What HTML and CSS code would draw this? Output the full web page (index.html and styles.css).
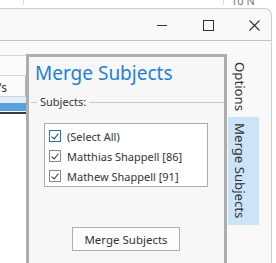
FILE: index.html
```html
<!DOCTYPE html>
<html lang="en">
<head>
    <meta charset="UTF-8">
    <title>Merge Subjects</title>
    <link rel="stylesheet" href="styles.css">
</head>
<body>
    <!-- what shows of the desktop behind the window -->
    <div class="backdrop">
        <span class="backdrop-gap first"></span>
        <span class="backdrop-gap second"></span>
        <span class="backdrop-text">10 N</span>
    </div>

    <div class="window">
        <div class="titlebar">
            <span class="caption-btn">
                <svg width="10" height="10" viewBox="0 0 10 10"><path d="M0 5.5H10" stroke="#333" stroke-width="1"/></svg>
            </span>
            <span class="caption-btn">
                <svg width="11" height="11" viewBox="0 0 11 11"><rect x="0.5" y="0.5" width="10" height="10" fill="none" stroke="#333" stroke-width="1"/></svg>
            </span>
            <span class="caption-btn close">
                <svg width="11" height="11" viewBox="0 0 11 11"><path d="M0.5 0.5L10.5 10.5M10.5 0.5L0.5 10.5" stroke="#333" stroke-width="1.1"/></svg>
            </span>
        </div>

        <div class="client">
            <!-- grid left of the dock, mostly covered -->
            <div class="left-pane">
                <div class="lp-row"></div>
                <div class="lp-row lp-header">'s</div>
                <div class="lp-selected"></div>
                <div class="lp-split"></div>
            </div>

            <div class="dock">
                <div class="dock-title">Merge Subjects</div>
                <fieldset class="group">
                    <legend>Subjects:</legend>
                    <div class="subject-list">
                        <label class="subject focused"><span class="check"></span>(Select All)</label>
                        <label class="subject"><span class="check"></span>Matthias Shappell [86]</label>
                        <label class="subject"><span class="check"></span>Mathew Shappell [91]</label>
                    </div>
                </fieldset>
                <div class="actions">
                    <button class="merge-button">Merge Subjects</button>
                </div>
            </div>

            <div class="side-tabs">
                <div class="side-tab">Options</div>
                <div class="side-tab active">Merge Subjects</div>
            </div>
        </div>
    </div>
</body>
</html>
```

FILE: styles.css
```css
/* General */
body {
    margin: 0;
    width: 276px;
    height: 263px;
    overflow: hidden;
    background: #ffffff;
    font-family: 'Noto Sans', 'Open Sans', sans-serif;
    color: #333;
}

/* Desktop strip above the window */
.backdrop {
    display: flex;
    height: 8px;
    overflow: hidden;
}

.backdrop-gap {
    height: 5px;
    border-right: 1px solid #dcdcdc;
}

.backdrop-gap.first {
    width: 23px;
}

.backdrop-gap.second {
    width: 199px;
}

.backdrop-text {
    font-size: 11px;
    line-height: 11px;
    color: #777;
    padding-left: 7px;
    margin-top: -5px;
}

/* Window */
.window {
    width: 271px;
    height: 255px;
    background: #f9f9f9;
    border-top: 1px solid #cfcfcf;
    border-right: 1px solid #cfcfcf;
    border-top-right-radius: 7px;
}

.titlebar {
    height: 31px;
    display: flex;
    justify-content: flex-end;
}

.caption-btn {
    width: 46px;
    display: flex;
    justify-content: center;
    align-items: center;
    padding-top: 1px;
}

.caption-btn.close {
    width: 40px;
    justify-content: flex-start;
    padding-left: 18px;
    box-sizing: border-box;
}

.client {
    display: flex;
    height: 223px;
    border-top: 1px solid #c4c4c4;
    box-sizing: border-box;
    padding-top: 13px;
}

/* Left pane */
.left-pane {
    width: 26px;
    margin-top: 1px;
    background: #ffffff;
    border-top: 1px solid #d6d6d6;
}

.lp-row {
    height: 19px;
    border-bottom: 1px solid #d6d6d6;
    background: #fbfbfb;
}

.lp-header {
    height: 20px;
    font-size: 12px;
    line-height: 24px;
    text-indent: -1px;
    border-right: 1px solid #b8b8b8;
}

.lp-selected {
    height: 14px;
    background: linear-gradient(#e3f0fb 0, #e3f0fb 6px, #58a1dd 6px);
}

.lp-split {
    height: 2px;
    margin-top: 1px;
    background: #3a3a3a;
}

/* Dock panel */
.dock {
    width: 195px;
    border: 3px solid #adadad;
    border-bottom: none;
    background: #f7f7f7;
    display: flex;
    flex-direction: column;
}

.dock-title {
    color: #2180d4;
    font-size: 19px;
    line-height: 24px;
    padding: 4px 0 0 6px;
}

.group {
    margin: 10px 0 0 2px;
    padding: 14px 0 0 13px;
    border: none;
    border-top: 1px solid #cbcbcb;
}

.group legend {
    font-size: 11px;
    line-height: 14px;
    padding: 0 3px;
    margin-left: -7px;
}

.subject-list {
    width: 162px;
    height: 60px;
    background: #ffffff;
    border: 1px solid #acacac;
    padding-top: 2px;
}

.subject {
    display: flex;
    align-items: center;
    height: 20px;
    font-size: 11px;
}

.check {
    width: 12px;
    height: 12px;
    box-sizing: border-box;
    border: 1px solid #8a8a8a;
    margin: 0 6px 0 4px;
    position: relative;
    background: #fff;
}

.check::after {
    content: "";
    position: absolute;
    left: 3px;
    top: 1px;
    width: 3px;
    height: 6px;
    border-right: 1.3px solid #333;
    border-bottom: 1.3px solid #333;
    transform: rotate(40deg);
}

.subject.focused .check {
    border-color: #1f6fc2;
}

/* Button */
.actions {
    display: flex;
    padding: 40px 0 0 43px;
}

.merge-button {
    width: 108px;
    height: 24px;
    background: #fdfdfd;
    border: 1px solid #adadad;
    font-family: inherit;
    font-size: 11.5px;
    color: #333;
    padding: 0;
}

/* Vertical tabs */
.side-tabs {
    width: 44px;
    display: flex;
    flex-direction: column;
    padding-top: 2px;
}

.side-tab {
    writing-mode: vertical-rl;
    width: 23px;
    margin-left: 1px;
    font-size: 13.2px;
    line-height: 23px;
    padding: 6px 8px 0 0;
    height: 53px;
    text-align: left;
}

.side-tab.active {
    background: #cce4f7;
    height: 102px;
    margin-top: 2px;
}
```
